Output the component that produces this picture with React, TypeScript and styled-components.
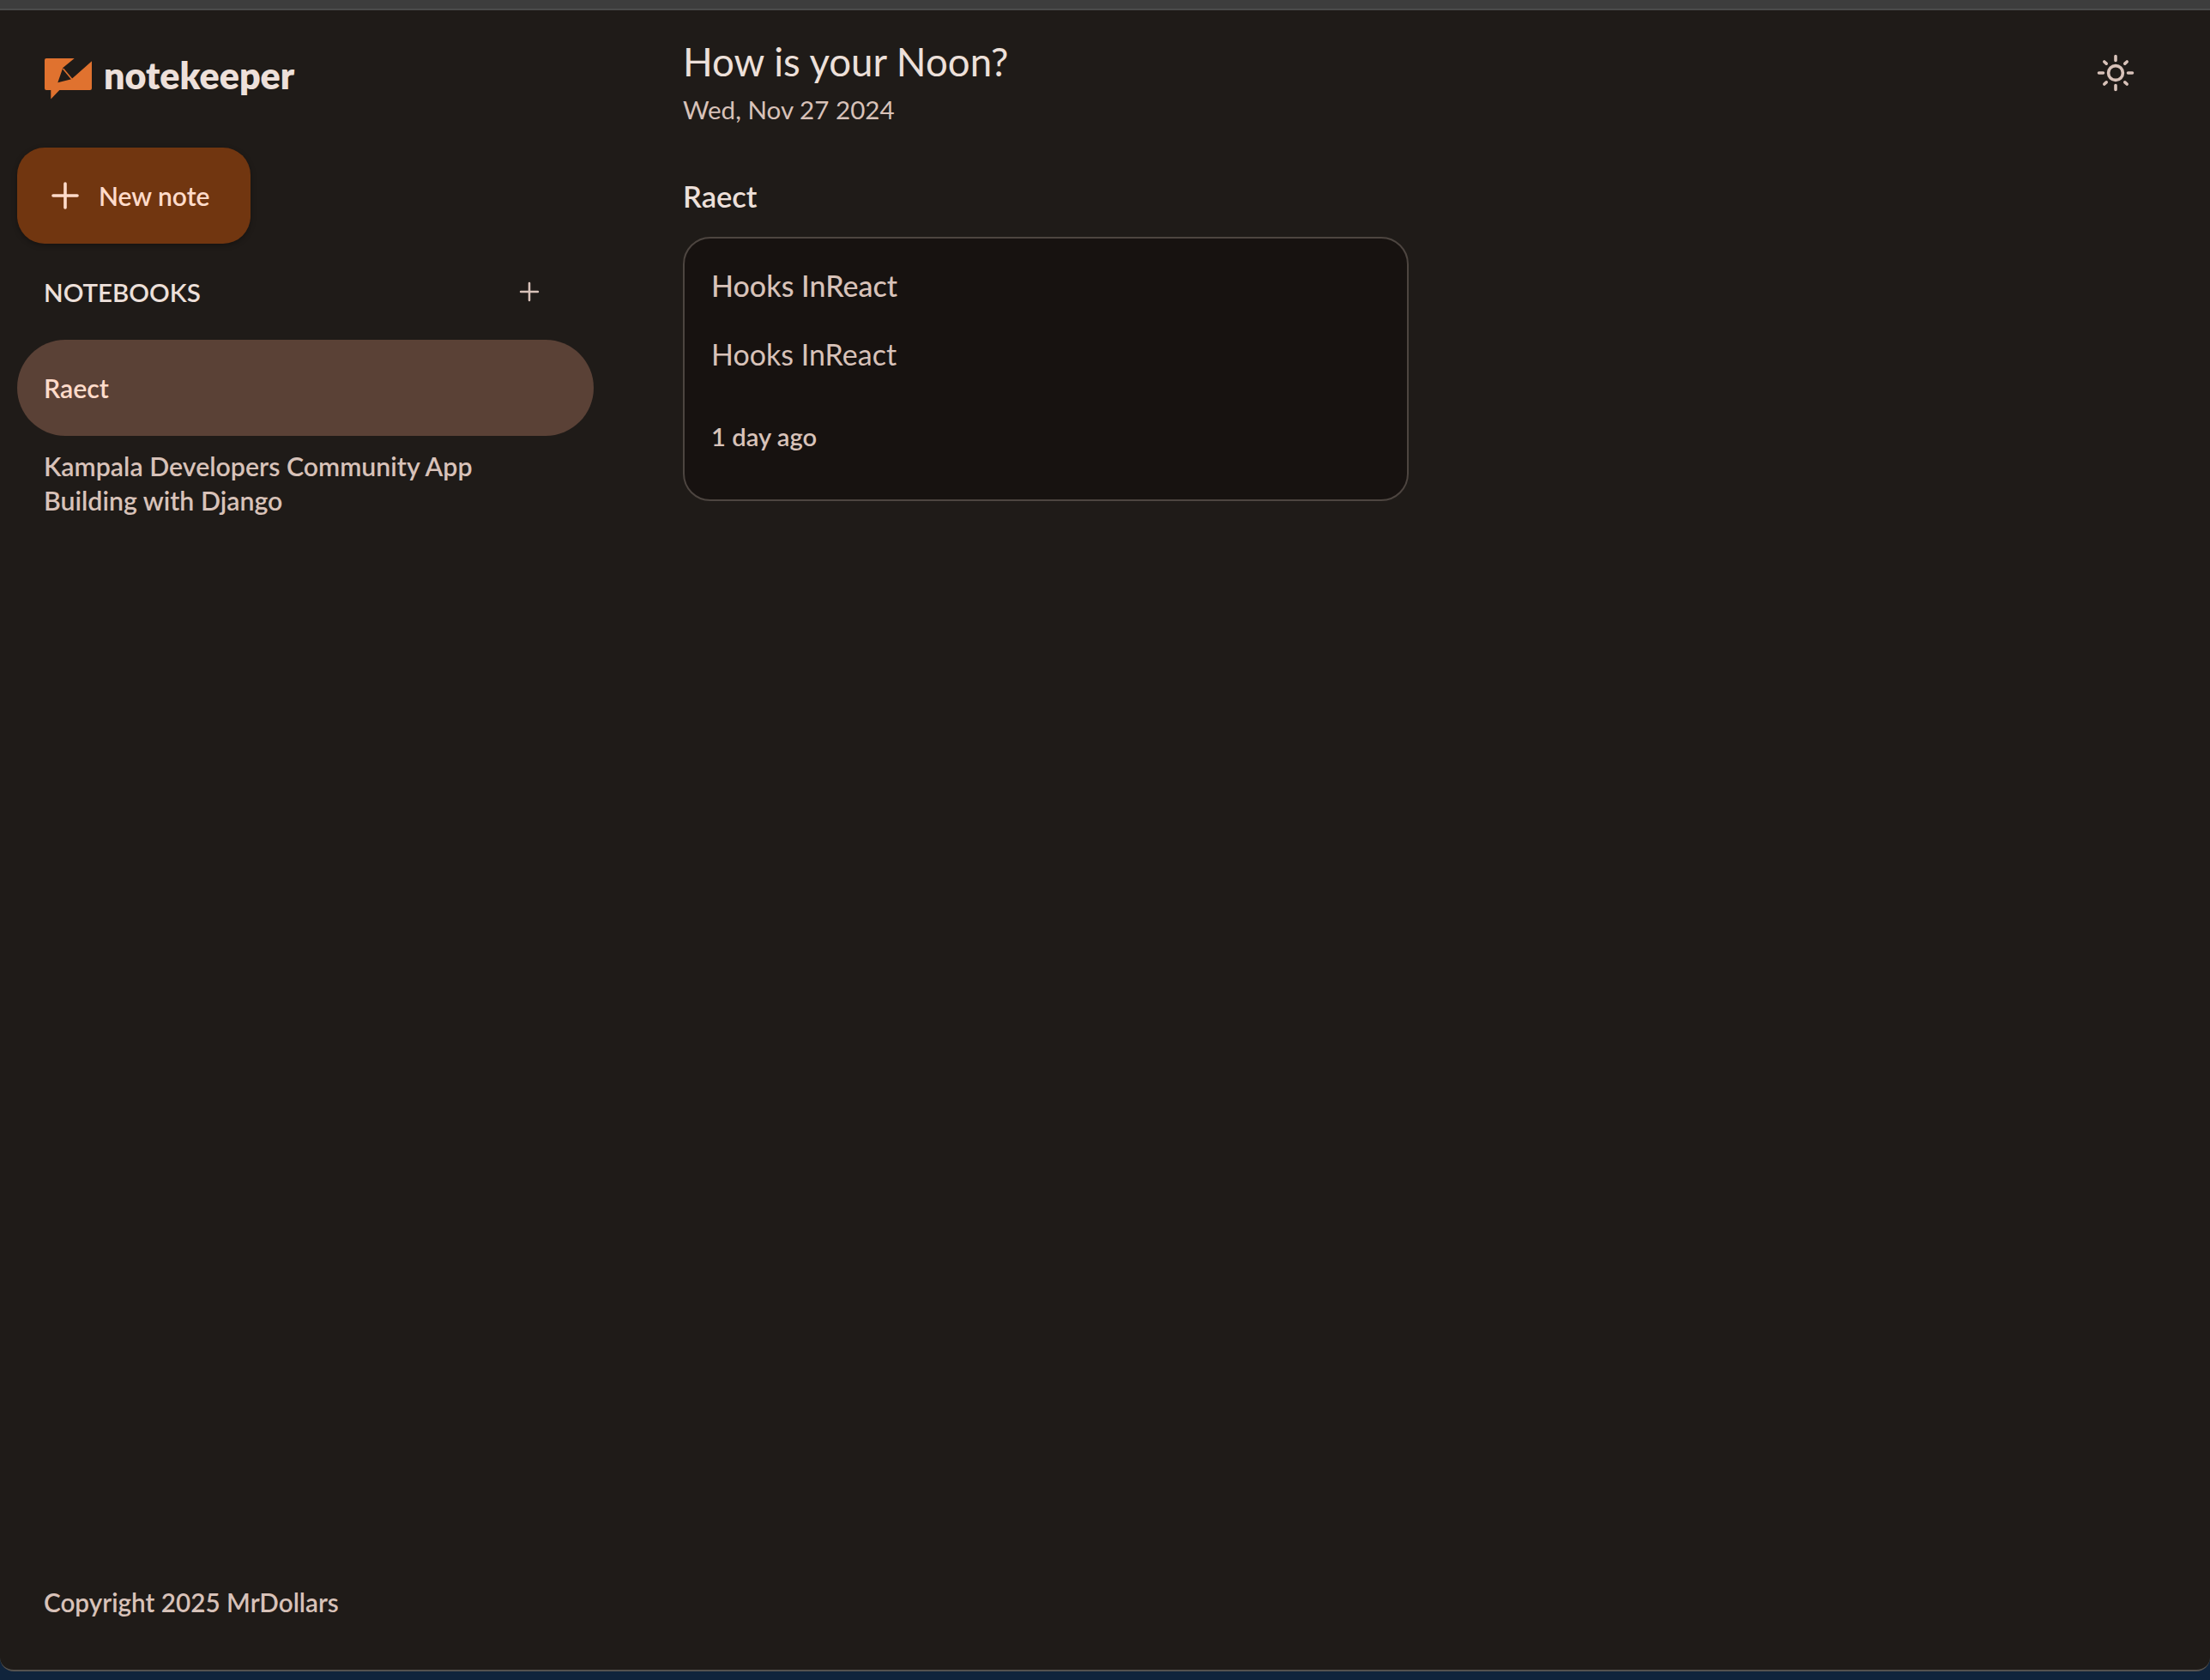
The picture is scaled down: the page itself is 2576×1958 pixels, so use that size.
import React from 'react';
import styled, { createGlobalStyle } from 'styled-components';
import { Plus } from 'lucide-react';

const GlobalStyle = createGlobalStyle`
  html, body { margin: 0; padding: 0; background: #10243c; }
  * { box-sizing: border-box; }
  body { font-family: 'Lato', 'Noto Sans', sans-serif; }
`;

const Page = styled.div`
  display: flex;
  flex-direction: column;
  width: 2576px;
  height: 1958px;
  overflow: hidden;
  background: #10243c;
`;

const TitleStrip = styled.div`
  flex: none;
  height: 12px;
  background: #3d3d3d;
  border-bottom: 2px solid #4b4b4b;
`;

const Window = styled.div`
  flex: none;
  display: flex;
  height: 1936px;
  background: #1f1b18;
  border-bottom: 2px solid #55524f;
  border-radius: 0 0 16px 16px;
`;

const Sidebar = styled.aside`
  flex: none;
  display: flex;
  flex-direction: column;
  width: 796px;
  padding: 0 104px 0 20px;
`;

const Brand = styled.div`
  display: flex;
  align-items: flex-start;
  gap: 14px;
  height: 160px;
  padding: 56px 0 0 32px;
`;

const BrandName = styled.span`
  margin-top: -6px;
  color: #ede0da;
  font-size: 43px;
  font-weight: 800;
  line-height: 52px;
`;

const NewNote = styled.button`
  display: flex;
  align-items: center;
  gap: 15px;
  width: 272px;
  height: 112px;
  padding: 0 0 0 32px;
  border: 0;
  border-radius: 32px;
  background: #713610;
  box-shadow: 0 2px 6px rgba(0, 0, 0, 0.3);
  color: #ffdbca;
  font-family: inherit;
  font-size: 30px;
  font-weight: 600;
`;

const SectionHead = styled.div`
  display: flex;
  align-items: center;
  justify-content: space-between;
  height: 112px;
  padding: 0 58px 0 31px;
  color: #ede0da;
  font-size: 29.5px;
  font-weight: 600;
`;

const Notebooks = styled.nav`
  display: flex;
  flex-direction: column;
`;

const Notebook = styled.div<{ $active?: boolean }>`
  display: flex;
  align-items: center;
  height: ${(p) => (p.$active ? '112px' : '40px')};
  padding-left: 31px;
  border-radius: 56px;
  background: ${(p) => (p.$active ? '#5a4136' : 'transparent')};
  color: ${(p) => (p.$active ? '#ffdbca' : '#d8c2b9')};
  font-size: 30.3px;
  font-weight: 600;
  line-height: 40px;
  &:nth-child(2) { margin-top: 15px; }
`;

const Footer = styled.footer`
  margin-top: auto;
  padding: 0 0 58px 31px;
  color: #d8c2b9;
  font-size: 29.7px;
  font-weight: 600;
  line-height: 40px;
`;

const Main = styled.main`
  flex: 1;
  display: flex;
  flex-direction: column;
  padding: 30px 88px 0 0;
`;

const TopRow = styled.header`
  display: flex;
  align-items: flex-start;
  justify-content: space-between;
  height: 166px;
`;

const Greeting = styled.h1`
  margin: 0 0 6px;
  color: #ede0da;
  font-size: 45.6px;
  font-weight: 400;
  line-height: 60px;
`;

const DateLine = styled.p`
  margin: 0;
  color: #d8c2b9;
  font-size: 29.6px;
  font-weight: 400;
  line-height: 40px;
`;

const ThemeToggle = styled.button`
  display: flex;
  margin-top: 21px;
  padding: 0;
  border: 0;
  background: transparent;
  color: #d8c2b9;
`;

const NotebookTitle = styled.h2`
  margin: 0 0 26px;
  color: #ede0da;
  font-size: 34.5px;
  font-weight: 600;
  line-height: 42px;
`;

const Card = styled.article`
  display: flex;
  flex-direction: column;
  width: 846px;
  height: 308px;
  padding: 35px 31px 0;
  border: 2px solid #4d4540;
  border-radius: 32px;
  background: #171210;
  color: #d8c2b9;
`;

const CardTitle = styled.h3`
  margin: 0 0 40px;
  font-size: 34px;
  font-weight: 500;
  line-height: 40px;
`;

const CardBody = styled.p`
  margin: 0 0 56px;
  font-size: 34px;
  font-weight: 400;
  line-height: 40px;
`;

const CardTime = styled.time`
  font-size: 29.2px;
  font-weight: 600;
  line-height: 40px;
`;

const Logo = () => (
  <svg width="55" height="48" viewBox="0 0 55 48" aria-hidden="true">
    <path
      fill="#e0722f"
      d="M2 0H34.7L21.3 11L15.3 28.3L31.3 24.3L55 3.3V35A2 2 0 0 1 53 37H17.3L7.3 47.5V37H2A2 2 0 0 1 0 35V2A2 2 0 0 1 2 0Z"
    />
    <path stroke="#e0722f" strokeWidth="1.6" d="M21.5 12L32 24.5" />
  </svg>
);

const SunIcon = () => (
  <svg width="44" height="44" viewBox="0 0 44 44" fill="none" stroke="currentColor" strokeWidth="3.6" strokeLinecap="round" aria-hidden="true">
    <circle cx="22" cy="22" r="8.4" />
    <path d="M22 2.5V7.5M22 36.5V41.5M2.5 22H7.5M36.5 22H41.5M8.8 9L11.2 11.2M32.8 32.8L35.2 35M8.8 35L11.2 32.8M32.8 11.2L35.2 9" />
  </svg>
);

export default function App() {
  return (
    <Page>
      <GlobalStyle />
      <TitleStrip />
      <Window>
        <Sidebar>
          <Brand>
            <Logo />
            <BrandName>notekeeper</BrandName>
          </Brand>
          <NewNote>
            <Plus size={48} strokeWidth={1.8} />
            New note
          </NewNote>
          <SectionHead>
            NOTEBOOKS
            <Plus size={34} strokeWidth={1.8} color="#d8c2b9" />
          </SectionHead>
          <Notebooks>
            <Notebook $active>Raect</Notebook>
            <Notebook>Kampala Developers Community App</Notebook>
            <Notebook>Building with Django</Notebook>
          </Notebooks>
          <Footer>Copyright 2025 MrDollars</Footer>
        </Sidebar>
        <Main>
          <TopRow>
            <div>
              <Greeting>How is your Noon?</Greeting>
              <DateLine>Wed, Nov 27 2024</DateLine>
            </div>
            <ThemeToggle>
              <SunIcon />
            </ThemeToggle>
          </TopRow>
          <NotebookTitle>Raect</NotebookTitle>
          <Card>
            <CardTitle>Hooks InReact</CardTitle>
            <CardBody>Hooks InReact</CardBody>
            <CardTime>1 day ago</CardTime>
          </Card>
        </Main>
      </Window>
    </Page>
  );
}
